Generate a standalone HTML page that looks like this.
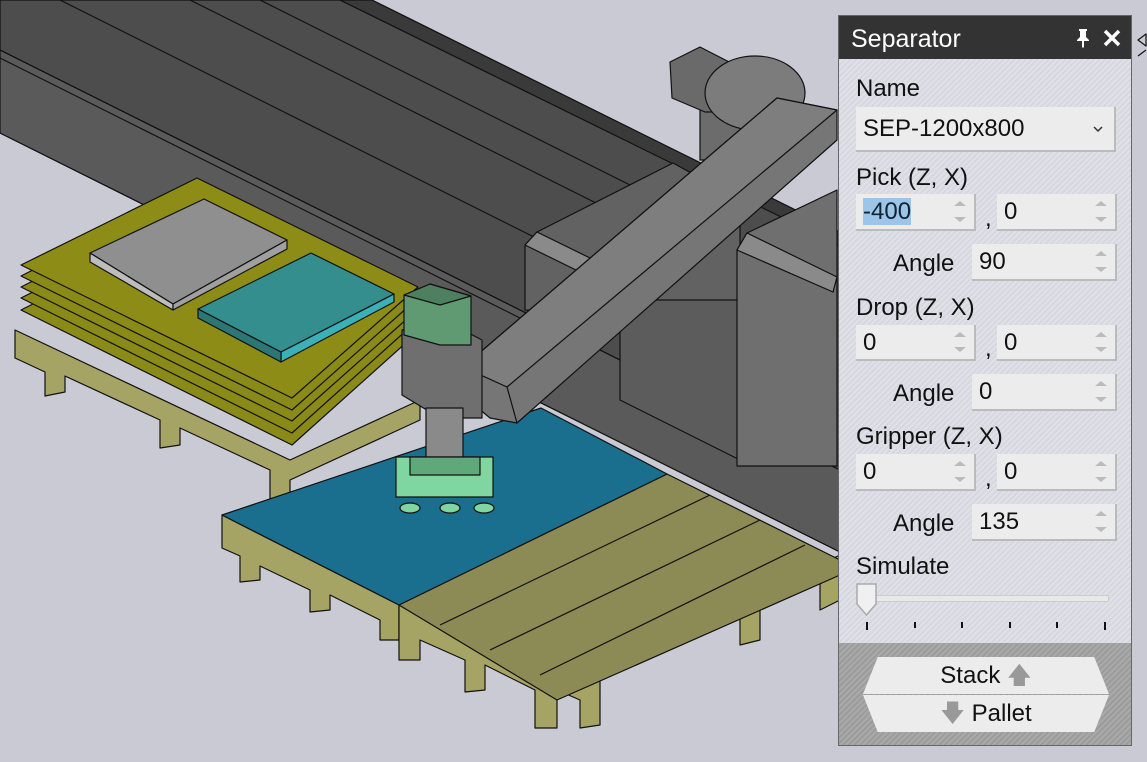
<!DOCTYPE html>
<html><head><meta charset="utf-8"><style>
html,body{margin:0;padding:0;width:1147px;height:762px;overflow:hidden;background:#c9cad4;font-family:"Segoe UI","Liberation Sans",sans-serif}
svg{position:absolute;left:0;top:0}
#panel{position:absolute;left:838px;top:15px;width:294px;height:731px;border:1px solid #666;box-sizing:border-box;
background:repeating-linear-gradient(135deg,#dfe0e8 0 2px,#d6d7df 2px 4px)}
#title{position:absolute;left:0;top:0;width:292px;height:43px;background:#333;color:#fff;font-size:25px;line-height:46px;padding-left:12px;box-sizing:border-box}
.lbl{position:absolute;font-size:24px;color:#111;line-height:26px}
.box{position:absolute;background:#ececec;border-right:2px solid #bbb;border-bottom:2px solid #bbb;box-sizing:border-box;font-size:24px;line-height:35px;padding-left:7px;color:#111}
.sp{position:absolute;right:8px;width:0;height:0;border-left:6px solid transparent;border-right:6px solid transparent}
.up{top:7px;border-bottom:5px solid #bbb}.dn{bottom:7px;border-top:5px solid #bbb}
#bot{position:absolute;left:0;top:627px;width:292px;height:102px;background:repeating-linear-gradient(135deg,#a9a9a9 0 2px,#9c9c9c 2px 4px)}
.btn{position:absolute;left:24px;width:246px;height:37px;background:#ececec;font-size:24px;text-align:center;line-height:38px;color:#111}
</style></head><body>
<svg width="1147" height="762" viewBox="0 0 1147 762" stroke="#111" stroke-width="1.2" stroke-linejoin="round">
<!-- rail -->
<polygon points="0,0 340,0 840,245 840,552 0,133" fill="#4d4d4d"/>
<polygon points="0,50 560,330 840,470 840,552 0,133" fill="#5a5a5a"/>
<line x1="0" y1="50" x2="840" y2="470"/>
<polyline fill="none" points="0,58 560,338"/>
<polyline fill="none" points="60,0 600,270"/>
<polyline fill="none" points="190,0 700,255"/>
<polyline fill="none" points="260,0 720,230"/>
<polygon points="340,0 372,0 840,232 840,246" fill="#3a3a3a"/>
<!-- left pallet under yellow -->
<polygon points="15,330 290,460 420,400 420,420 290,480 290,505 270,510 270,470 180,428 180,445 160,448 160,420 65,376 65,392 45,396 45,372 15,358" fill="#a6a464"/>
<!-- yellow sheets -->
<polygon points="21,310 195,222 418,332 292,445" fill="#8a8a18"/>
<polygon points="21,298 195,210 418,320 292,433" fill="#8a8a18"/>
<polygon points="21,287 195,199 418,309 292,421" fill="#8a8a18"/>
<polygon points="21,276 195,188 418,298 292,410" fill="#8a8a18"/>
<polygon points="21,265 197,178 418,287 292,398" fill="#8c8c17"/>
<!-- gray box -->
<polygon points="90,253 204,199 287,240 173,304" fill="#8f8f8f"/>
<polygon points="90,253 173,304 173,310 90,262" fill="#bdbdbd"/>
<polygon points="173,304 287,240 287,249 173,310" fill="#a0a0a0"/>
<!-- teal box -->
<polygon points="198,309 311,253 394,294 281,352" fill="#348e8e"/>
<polygon points="281,352 394,294 394,302 281,362" fill="#3cb0b8"/>
<polygon points="198,309 281,352 281,362 198,318" fill="#2c7676"/>
<!-- right lower pallet front -->
<polygon points="222,515 399,605 399,640 380,640 380,620 330,595 330,610 310,612 310,590 260,566 260,580 240,582 240,556 222,548" fill="#a6a464"/>
<polygon points="399,605 557,690 840,555 840,600 820,610 820,575 760,605 760,640 740,645 740,615 600,680 600,725 580,728 580,700 557,690 557,728 535,728 535,690 485,665 485,690 465,692 465,660 420,640 420,660 399,660" fill="#a6a464"/>
<!-- right pallet top -->
<polygon points="399,605 667,474 840,560 840,575 557,700" fill="#8c8a55"/>
<line x1="440" y1="625" x2="710" y2="495"/><line x1="490" y1="650" x2="760" y2="520"/><line x1="540" y1="675" x2="805" y2="545"/>
<!-- blue sheet -->
<polygon points="222,515 541,408 667,474 399,605" fill="#1a6e8e"/>
<!-- robot carriage -->
<polygon points="525,245 537,232 673,163 740,200 740,320 525,310" fill="#626262"/>
<polygon points="525,245 537,232 590,258 580,272" fill="#8a8a8a"/>
<polygon points="620,300 740,300 740,460 620,400" fill="#5c5c5c"/>
<polygon points="737,250 747,233 837,190 837,466 737,466" fill="#6f6f6f"/>
<polygon points="737,250 747,233 837,277 833,292" fill="#8a8a8a"/>
<polygon points="700,100 740,100 740,160 700,160" fill="#6c6c6c"/>
<polygon points="670,62 700,47 735,65 735,112 705,112 672,98" fill="#6a6a6a"/>
<ellipse cx="755" cy="93" rx="50" ry="37" fill="#7c7c7c"/>
<!-- arm -->
<polygon points="463,367 777,98 837,110 837,140 517,423 490,418 466,398" fill="#767676"/>
<polygon points="463,367 777,98 837,110 507,387" fill="#7e7e7e"/>
<line x1="507" y1="387" x2="517" y2="423"/>
<!-- gripper column -->
<polygon points="402,330 440,318 482,340 482,418 440,418 402,395" fill="#6f6f6f"/>
<polygon points="404,295 430,284 471,296 471,345 440,345 404,335" fill="#5f9a72"/>
<polygon points="404,295 430,284 471,296 440,305" fill="#4e8060"/>
<rect x="426" y="408" width="37" height="63" fill="#8a8a8a"/>
<rect x="396" y="457" width="97" height="40" fill="#7fd6a0"/>
<rect x="410" y="457" width="70" height="18" fill="#5fa87a"/>
<ellipse cx="410" cy="508" rx="10" ry="5" fill="#7fd6a0"/><ellipse cx="450" cy="508" rx="10" ry="5" fill="#7fd6a0"/><ellipse cx="484" cy="508" rx="10" ry="5" fill="#7fd6a0"/>
<path d="M1138 40 l8 -6 v12 z M1138 56 l8 -6" fill="none"/>
</svg>
<div id="panel">
<div id="title">Separator
<svg style="left:236px;top:12px" width="16" height="20" viewBox="0 0 16 20"><path d="M4 1h8v2h-1v6l3 3v1H9v6l-1 1-1-1v-6H2v-1l3-3V3H4z" fill="#fff"/></svg>
<svg style="left:264px;top:13px" width="18" height="18" viewBox="0 0 18 18"><path d="M2 2L16 16M16 2L2 16" stroke="#fff" stroke-width="3.5"/></svg></div>
<div class="lbl" style="left:17px;top:60px">Name</div>
<div class="box" style="left:17px;top:91px;width:260px;height:45px;line-height:44px">SEP-1200x800
<svg style="left:236px;top:18px" width="12" height="8" viewBox="0 0 12 8"><path d="M2 2l4 4 4-4" fill="none" stroke="#333" stroke-width="1.5"/></svg></div>
<div class="lbl" style="left:17px;top:149px">Pick (Z, X)</div>
<div class="box" style="left:17px;top:178px;width:120px;height:37px"><span style="background:#9cc5e8;color:#123">-400</span><i class="sp up"></i><i class="sp dn"></i></div>
<div class="lbl" style="left:146px;top:190px">,</div>
<div class="box" style="left:158px;top:178px;width:120px;height:37px">0<i class="sp up"></i><i class="sp dn"></i></div>
<div class="lbl" style="left:54px;top:235px">Angle</div>
<div class="box" style="left:133px;top:228px;width:145px;height:37px">90<i class="sp up"></i><i class="sp dn"></i></div>
<div class="lbl" style="left:17px;top:279px">Drop (Z, X)</div>
<div class="box" style="left:17px;top:309px;width:120px;height:36px">0<i class="sp up"></i><i class="sp dn"></i></div>
<div class="lbl" style="left:146px;top:320px">,</div>
<div class="box" style="left:158px;top:309px;width:120px;height:36px">0<i class="sp up"></i><i class="sp dn"></i></div>
<div class="lbl" style="left:54px;top:365px">Angle</div>
<div class="box" style="left:133px;top:358px;width:145px;height:37px">0<i class="sp up"></i><i class="sp dn"></i></div>
<div class="lbl" style="left:17px;top:408px">Gripper (Z, X)</div>
<div class="box" style="left:17px;top:438px;width:120px;height:37px">0<i class="sp up"></i><i class="sp dn"></i></div>
<div class="lbl" style="left:146px;top:450px">,</div>
<div class="box" style="left:158px;top:438px;width:120px;height:37px">0<i class="sp up"></i><i class="sp dn"></i></div>
<div class="lbl" style="left:54px;top:495px">Angle</div>
<div class="box" style="left:133px;top:488px;width:145px;height:37px">135<i class="sp up"></i><i class="sp dn"></i></div>
<div class="lbl" style="left:17px;top:538px">Simulate</div>
<div style="position:absolute;left:30px;top:579px;width:238px;height:5px;background:#e8e8e8;border:1px solid #ccc"></div>
<svg style="left:17px;top:567px" width="22" height="34"><path d="M1 1h19v20l-9.5 11L1 21z" fill="#f0f0f0" stroke="#aaa" stroke-width="1.5"/></svg>
<svg style="left:0;top:604px" width="292" height="12"><g stroke="#111" stroke-width="2"><line x1="28" y1="2" x2="28" y2="10"/><line x1="76" y1="2" x2="76" y2="8"/><line x1="123" y1="2" x2="123" y2="8"/><line x1="171" y1="2" x2="171" y2="8"/><line x1="218" y1="2" x2="218" y2="8"/><line x1="266" y1="2" x2="266" y2="10"/></g></svg>
<div id="bot">
<div class="btn" style="top:14px;clip-path:polygon(6% 0,94% 0,100% 100%,0 100%)">Stack <span style="color:#999">&#x1F845;</span></div>
<div class="btn" style="top:52px;clip-path:polygon(0 0,100% 0,94% 100%,6% 100%)"><span style="color:#999">&#x1F847;</span> Pallet</div>
</div>
</div>
</body></html>
